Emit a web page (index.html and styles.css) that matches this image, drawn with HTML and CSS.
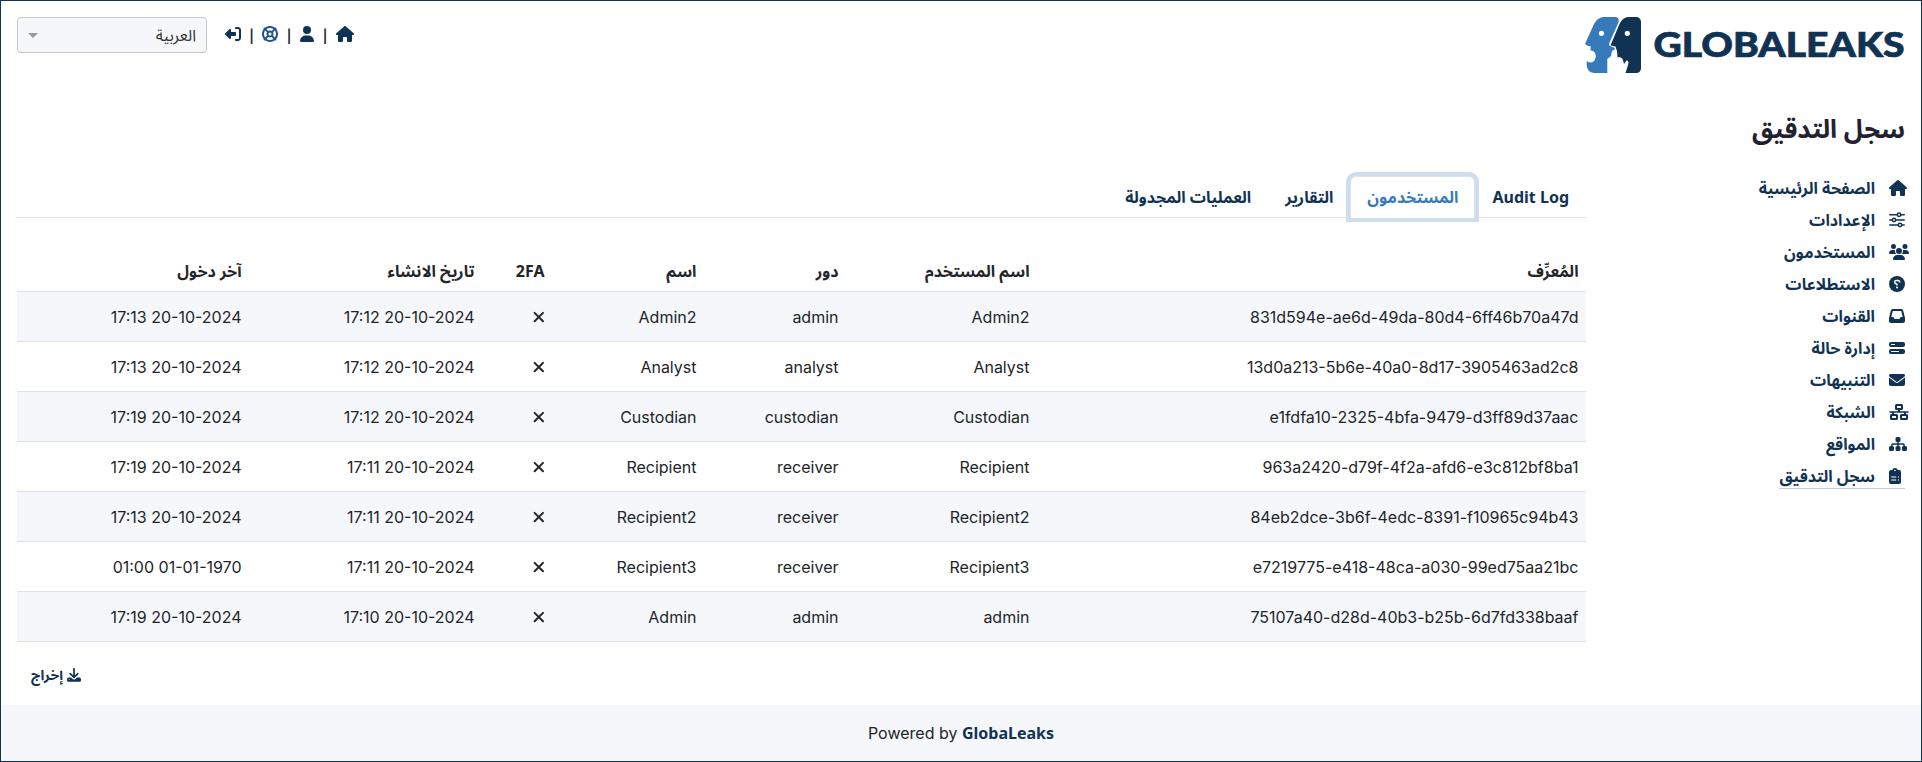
FILE: index.html
```html
<!DOCTYPE html>
<html lang="ar" dir="rtl">
<head>
<meta charset="utf-8">
<title>GlobaLeaks</title>
<link rel="stylesheet" href="styles.css">
</head>
<body>
<svg class="defs" aria-hidden="true">
  <symbol id="house" viewBox="0 0 576 512"><path d="M575.8 255.5c0 18-15 32.1-32 32.1h-32l.7 160.2c0 2.7-.2 5.4-.5 8.1V472c0 22.1-17.9 40-40 40H392c-22.1 0-40-17.9-40-40V384c0-17.7-14.3-32-32-32H256c-17.7 0-32 14.3-32 32v88c0 22.1-17.9 40-40 40H104c-22.1 0-40-17.9-40-40V287.6H32c-18 0-32-14-32-32.1c0-9 3-17 10-24L266.4 8c7-7 15-8 22-8s15 2 21 7L564.8 231.500c8 7 12 15 11 24z"/></symbol>
  <symbol id="user" viewBox="0 0 448 512"><path d="M224 256A128 128 0 1 0 224 0a128 128 0 1 0 0 256zm-45.700 48C79.800 304 0 383.800 0 482.300C0 498.700 13.300 512 29.700 512H418.300c16.400 0 29.700-13.300 29.700-29.700C448 383.800 368.200 304 269.700 304H178.300z"/></symbol>
  <symbol id="exit" viewBox="0 0 512 512"><path transform="matrix(-1 0 0 1 512 0)" d="M502.600 278.600c12.500-12.500 12.500-32.800 0-45.300L374.600 105.300C360 93 320 98 320 128v64H192c-17.700 0-32 14.300-32 32v64c0 17.700 14.300 32 32 32h128v64c0 30 40 35 54.600 22.600zM160 96c17.700 0 32-14.300 32-32s-14.300-32-32-32H96C43 32 0 75 0 128v256c0 53 43 96 96 96h64c17.700 0 32-14.300 32-32s-14.300-32-32-32H96c-17.700 0-32-14.300-32-32V128c0-17.700 14.300-32 32-32z"/></symbol>
  <symbol id="ring" viewBox="0 0 512 512"><path d="M367.2 412.5C335.9 434.9 297.5 448 256 448s-79.9-13.1-111.200-35.500l58-58c15.800 8.600 34 13.500 53.300 13.500s37.400-4.900 53.300-13.500l57.900 58zm90.700 .8c33.800-43.400 54-98 54-157.300s-20.200-113.900-54-157.300c9-12.500 7.900-30.100-3.400-41.300S425.800 45 413.300 54C369.900 20.200 315.300 0 256 0S142.100 20.200 98.700 54c-12.500-9-30.100-7.900-41.300 3.400S45 86.200 54 98.700C20.200 142.100 0 196.700 0 256s20.200 113.900 54 157.300c-9 12.500-7.900 30.100 3.400 41.300S86.200 467 98.700 458c43.400 33.800 98 54 157.300 54s113.900-20.200 157.300-54c12.500 9 30.100 7.900 41.300-3.400s12.400-28.800 3.400-41.300zm-45.500-46.100l-57.900-57.900c8.600-15.800 13.500-34 13.500-53.300s-4.900-37.400-13.500-53.300l57.900-57.900C434.900 176.100 448 214.500 448 256s-13.100 79.900-35.500 111.200zM367.200 99.500l-57.900 57.900c-15.800-8.600-34-13.500-53.300-13.500s-37.400 4.900-53.300 13.500L144.800 99.500C176.100 77.100 214.500 64 256 64s79.900 13.100 111.200 35.500zM157.500 309.300l-57.900 57.900C77.100 335.900 64 297.500 64 256s13.100-79.900 35.500-111.200l57.900 57.900c-8.600 15.800-13.500 34-13.500 53.300s4.900 37.400 13.500 53.300zM208 256a48 48 0 1 1 96 0 48 48 0 1 1-96 0z" fill-rule="evenodd"/></symbol>
  <symbol id="sliders" viewBox="0 0 16 16"><g fill="none" stroke="currentColor" stroke-width="1.500" stroke-linecap="round"><path d="M.8 2.700H8M12 2.700h3.200M.8 7.900H3M7 7.900h8.200M.8 13H9M13 13h2.200"/><circle cx="10" cy="2.700" r="1.700"/><circle cx="5" cy="7.900" r="1.700"/><circle cx="11" cy="13" r="1.700"/></g></symbol>
  <symbol id="users" viewBox="0 0 640 512"><path d="M144 0a80 80 0 1 1 0 160A80 80 0 1 1 144 0zM512 0a80 80 0 1 1 0 160A80 80 0 1 1 512 0zM0 298.700C0 239.800 47.800 192 106.700 192h42.700c15.900 0 31 3.500 44.600 9.700c-1.300 7.200-1.900 14.700-1.900 22.300c0 38.200 16.800 72.500 43.300 96H21.300C9.600 320 0 310.400 0 298.700zM405.300 320c26.600-23.500 43.300-57.800 43.300-96c0-7.600-.7-15-1.900-22.300c13.600-6.300 28.700-9.700 44.600-9.700h42.700C592.200 192 640 239.800 640 298.700c0 11.800-9.600 21.300-21.300 21.300zM224 224a96 96 0 1 1 192 0a96 96 0 1 1-192 0zM128 485.300C128 411.700 187.700 352 261.300 352h117.400C452.300 352 512 411.700 512 485.300c0 14.700-11.900 26.700-26.700 26.700H154.700c-14.700 0-26.700-11.900-26.700-26.700z"/></symbol>
  <symbol id="question" viewBox="0 0 16 16"><circle cx="8" cy="8" r="8"/><path d="M5.400 6V5.800C5.400 5 6.100 4.400 7 4.400H8.600C9.600 4.400 10.400 5.100 10.400 6c0 .8-.5 1.200-1 1.500L8 8.400v.6" transform="matrix(-1 0 0 1 16 0)" fill="none" stroke="#fff" stroke-width="1.500" stroke-linecap="round"/><circle cx="8" cy="11.500" r="1" fill="#fff"/></symbol>
  <symbol id="inbox" viewBox="0 0 512 512"><path fill-rule="evenodd" d="M121 32C91.600 32 66 52 58.900 80.500L1.900 308.400C.6 313.500 0 318.700 0 323.900V416c0 35.300 28.700 64 64 64h384c35.300 0 64-28.700 64-64v-92.100c0-5.200-.6-10.400-1.900-15.500L453.100 80.500C446 52 420.400 32 391 32zm0 64h270l48 192h-51.200c-12.100 0-23.200 6.800-28.600 17.700l-14.300 28.600c-5.400 10.800-16.500 17.700-28.600 17.700H195.800c-12.100 0-23.200-6.800-28.600-17.700l-14.300-28.600c-5.400-10.800-16.500-17.700-28.600-17.700H73z"/></symbol>
  <symbol id="server" viewBox="0 0 16 16"><path fill-rule="evenodd" d="M2 2h12a2 2 0 0 1 2 2v1a2 2 0 0 1-2 2H2a2 2 0 0 1-2-2V4a2 2 0 0 1 2-2zm0 1.900v1.200h4V3.900zM2 9h12a2 2 0 0 1 2 2v1a2 2 0 0 1-2 2H2a2 2 0 0 1-2-2v-1a2 2 0 0 1 2-2zm0 1.900v1.200h8v-1.200z"/></symbol>
  <symbol id="mail" viewBox="0 0 512 512"><path d="M48 64C21.500 64 0 85.500 0 112c0 15.100 7.100 29.300 19.200 38.400L236.800 313.600c11.400 8.500 27 8.500 38.400 0L492.800 150.400c12.100-9.100 19.200-23.300 19.200-38.400c0-26.500-21.500-48-48-48zM0 176v208c0 35.300 28.700 64 64 64h384c35.300 0 64-28.700 64-64V176L294.400 339.200c-22.800 17.100-54 17.100-76.800 0z"/></symbol>
  <symbol id="network" viewBox="0 0 20 16"><path fill-rule="evenodd" d="M7.500 0h5A1.500 1.500 0 0 1 14 1.500v3A1.500 1.500 0 0 1 12.500 6H11v1.200h8a.8.8 0 0 1 0 1.600h-2V10h.5a1.500 1.500 0 0 1 1.500 1.500v3a1.500 1.500 0 0 1-1.500 1.500h-5a1.500 1.500 0 0 1-1.500-1.500v-3a1.500 1.500 0 0 1 1.500-1.500H15V8.800H5V10h2.500A1.500 1.500 0 0 1 9 11.500v3A1.500 1.500 0 0 1 7.500 16h-5A1.500 1.500 0 0 1 1 14.500v-3A1.500 1.500 0 0 1 2.500 10H3V8.800H1a.8.8 0 0 1 0-1.600h8V6H7.500A1.500 1.500 0 0 1 6 4.500v-3A1.500 1.500 0 0 1 7.500 0zM8 2v2h4V2zM3 12v2h4v-2zM13 12v2h4v-2z"/></symbol>
  <symbol id="sitemap" viewBox="0 0 18 16"><path d="M8 1h2a1.500 1.500 0 0 1 1.500 1.500v2A1.500 1.500 0 0 1 10 6h-.3v1.300h4.500a1.600 1.600 0 0 1 1.600 1.600V10h.7a1.500 1.500 0 0 1 1.500 1.500v2a1.500 1.500 0 0 1-1.500 1.500h-2a1.500 1.500 0 0 1-1.500-1.500v-2a1.500 1.500 0 0 1 1.300-1.500V8.700H9.700V10h.3a1.500 1.500 0 0 1 1.500 1.500v2A1.500 1.500 0 0 1 10 15H8a1.500 1.500 0 0 1-1.500-1.500v-2A1.500 1.500 0 0 1 8 10h.3V8.700H3.700V10A1.500 1.500 0 0 1 5 11.500v2A1.500 1.500 0 0 1 3.500 15h-2A1.500 1.500 0 0 1 0 13.500v-2A1.500 1.500 0 0 1 1.500 10h.7V8.900a1.600 1.600 0 0 1 1.600-1.600h4.500V6H8a1.500 1.500 0 0 1-1.500-1.500v-2A1.500 1.500 0 0 1 8 1z"/></symbol>
  <symbol id="clipboard" viewBox="0 0 12 16"><path d="M2 2h1.200a3 3 0 0 1 5.600 0H10a2 2 0 0 1 2 2v10a2 2 0 0 1-2 2H2a2 2 0 0 1-2-2V4a2 2 0 0 1 2-2z"/><path d="M5.200 2.500h1.600M2.200 9h5M2.200 12h5M9 9h1M9 12h1" stroke="#fff" stroke-width="1.100"/></symbol>
  <symbol id="download" viewBox="0 0 14 14"><path fill-rule="evenodd" d="M2 9.500h2l1.600 1.400a2 2 0 0 0 2.800 0L10 9.500h2A1.700 1.700 0 0 1 14 11v1.200a1.500 1.500 0 0 1-1.500 1.500h-11A1.500 1.500 0 0 1 0 12.200V11.200A1.700 1.700 0 0 1 2 9.500zm-.2 1.700v.9h.9v-.9z"/><path d="M7 .8V9M3.200 5.600 7 9.300l3.800-3.700" fill="none" stroke="currentColor" stroke-width="1.700" stroke-linecap="round"/></symbol>
  <symbol id="cross" viewBox="0 0 12 12"><path d="M1.600 1.900l8.400 8.400M10 1.900L1.600 10.300" fill="none" stroke="currentColor" stroke-width="2" stroke-linecap="round"/></symbol>
</svg>
<div class="page">
  <header class="header">
    <svg class="logo" viewBox="0 0 320 56">
      <path class="logo-light" d="M18 0H31Q35 1 33.300 6L24.300 26Q23.500 28.500 25 29L29.500 30.700L30 32.300L27 34L26 39L22.300 42V56H9Q2 55 1.700 48V44Q6 47 9 44Q12 40 10 36Q9 33 5.500 33.500L5.700 29.500L2 28.500L0 27L9 7Q12 1 18 0z"/>
      <path class="logo-dark" d="M43 0H52Q56 1 56 5V51Q56 56 51 56H40.500L43.500 46.500Q43.500 43 41.500 43.500L39 47Q38 42 36.500 41Q34 39.500 32.500 40.500L32 34L30.500 29.500L25.500 28.500L34.500 7Q37 1 43 0z"/>
      <circle cx="16.500" cy="16.300" r="2.600" fill="#fff"/><circle cx="42.300" cy="16.300" r="2.600" fill="#fff"/>
      <text class="logo-text" x="68.500" y="40" textLength="251" lengthAdjust="spacingAndGlyphs" direction="ltr">GLOBALEAKS</text>
    </svg>
    <div class="tools">
      <svg class="icon w18"><use href="#house"/></svg><span class="sep">|</span>
      <svg class="icon w14"><use href="#user"/></svg><span class="sep">|</span>
      <svg class="icon w16 ring"><use href="#ring"/></svg><span class="sep last">|</span>
      <svg class="icon w16"><use href="#exit"/></svg>
      <div class="select"><span>العربية</span><i class="caret"></i></div>
    </div>
  </header>
  <h1 class="title">سجل التدقيق</h1>
  <div class="body">
    <nav class="side">
      <a class="link"><span class="glyph"><svg class="icon w18"><use href="#house"/></svg></span>الصفحة الرئيسية</a>
      <a class="link"><span class="glyph"><svg class="icon w16"><use href="#sliders"/></svg></span>الإعدادات</a>
      <a class="link"><span class="glyph"><svg class="icon w20"><use href="#users"/></svg></span>المستخدمون</a>
      <a class="link"><span class="glyph"><svg class="icon w16"><use href="#question"/></svg></span>الاستطلاعات</a>
      <a class="link"><span class="glyph"><svg class="icon w16"><use href="#inbox"/></svg></span>القنوات</a>
      <a class="link"><span class="glyph"><svg class="icon w16"><use href="#server"/></svg></span>إدارة حالة</a>
      <a class="link"><span class="glyph"><svg class="icon w16"><use href="#mail"/></svg></span>التنبيهات</a>
      <a class="link"><span class="glyph"><svg class="icon w20"><use href="#network"/></svg></span>الشبكة</a>
      <a class="link"><span class="glyph"><svg class="icon w18"><use href="#sitemap"/></svg></span>المواقع</a>
      <a class="link current"><span class="glyph"><svg class="icon w12"><use href="#clipboard"/></svg></span>سجل التدقيق</a>
    </nav>
    <main class="main">
      <div class="tabs"><a class="tab">Audit Log</a><a class="tab active">المستخدمون</a><a class="tab">التقارير</a><a class="tab">العمليات المجدولة</a></div>
      <table class="table">
        <colgroup><col class="c-id"><col class="c-username"><col class="c-role"><col class="c-name"><col class="c-2fa"><col class="c-created"><col class="c-login"></colgroup>
        <thead><tr><th>المُعرِّف</th><th>اسم المستخدم</th><th>دور</th><th>اسم</th><th>2FA</th><th>تاريخ الانشاء</th><th>آخر دخول</th></tr></thead>
        <tbody>
          <tr><td>831d594e-ae6d-49da-80d4-6ff46b70a47d</td><td>Admin2</td><td>admin</td><td>Admin2</td><td><svg class="cross"><use href="#cross"/></svg></td><td>20-10-2024 17:12</td><td>20-10-2024 17:13</td></tr>
          <tr><td>13d0a213-5b6e-40a0-8d17-3905463ad2c8</td><td>Analyst</td><td>analyst</td><td>Analyst</td><td><svg class="cross"><use href="#cross"/></svg></td><td>20-10-2024 17:12</td><td>20-10-2024 17:13</td></tr>
          <tr><td>e1fdfa10-2325-4bfa-9479-d3ff89d37aac</td><td>Custodian</td><td>custodian</td><td>Custodian</td><td><svg class="cross"><use href="#cross"/></svg></td><td>20-10-2024 17:12</td><td>20-10-2024 17:19</td></tr>
          <tr><td>963a2420-d79f-4f2a-afd6-e3c812bf8ba1</td><td>Recipient</td><td>receiver</td><td>Recipient</td><td><svg class="cross"><use href="#cross"/></svg></td><td>20-10-2024 17:11</td><td>20-10-2024 17:19</td></tr>
          <tr><td>84eb2dce-3b6f-4edc-8391-f10965c94b43</td><td>Recipient2</td><td>receiver</td><td>Recipient2</td><td><svg class="cross"><use href="#cross"/></svg></td><td>20-10-2024 17:11</td><td>20-10-2024 17:13</td></tr>
          <tr><td>e7219775-e418-48ca-a030-99ed75aa21bc</td><td>Recipient3</td><td>receiver</td><td>Recipient3</td><td><svg class="cross"><use href="#cross"/></svg></td><td>20-10-2024 17:11</td><td>01-01-1970 01:00</td></tr>
          <tr><td>75107a40-d28d-40b3-b25b-6d7fd338baaf</td><td>admin</td><td>admin</td><td>Admin</td><td><svg class="cross"><use href="#cross"/></svg></td><td>20-10-2024 17:10</td><td>20-10-2024 17:19</td></tr>
        </tbody>
      </table>
      <div class="export"><svg class="icon-sm"><use href="#download"/></svg><span>إخراج</span></div>
    </main>
  </div>
  <footer class="footer" dir="ltr"><span>Powered by <b>GlobaLeaks</b></span></footer>
</div>
</body>
</html>
```
FILE: styles.css
```css
* { box-sizing: border-box; }
body { margin: 0; background: #fff; color: #212529; font: 16px/24px Inter, "Noto Sans", "Noto Sans Arabic", sans-serif; }
.defs { display: none; }
.page { height: 762px; border: 1px solid #103253; display: flex; flex-direction: column; overflow: hidden; }
.header { display: flex; justify-content: space-between; height: 96px; padding: 16px; }
.logo { width: 320px; height: 56px; overflow: visible; }
.logo-light { fill: #377abc; }
.logo-dark { fill: #103253; }
.logo-text { fill: #103253; stroke: #103253; stroke-width: .7px; font: 900 33.5px Lato, sans-serif; }
.tools { display: flex; align-items: flex-start; color: #103253; }
.icon { display: block; height: 16px; fill: currentColor; flex: none; }
.tools > .icon { margin-top: 9px; }
.w12 { width: 12px; } .w14 { width: 14px; } .w16 { width: 16px; } .w18 { width: 18px; } .w20 { width: 20px; }
.ring { color: #24568a; }
.sep { width: 22px; text-align: center; font: 600 13px/38px Inter, sans-serif; color: #212529; }
.last { width: 21px; }
.select { width: 190px; height: 36px; margin-right: 18px; padding: 0 10px 0 10px; border: 1px solid #c8c8c8; border-radius: 4px; background: #f5f7fb; color: #333; display: flex; align-items: center; justify-content: space-between; }
.caret { border: 5px solid transparent; border-top-color: #999; border-bottom: 0; }
.title { margin: 12px 16px 0; height: 42px; font: bold 25.6px/40px "Noto Sans", "Noto Sans Arabic", sans-serif; color: #212130; }
.body { display: flex; flex: 1; padding: 0 16px; }
.side { width: 319px; padding-top: 25px; display: flex; flex-direction: column; align-items: flex-start; gap: 8px; }
.link { display: flex; gap: 14px; height: 24px; align-items: center; font: bold 16px/24px "Noto Sans", "Noto Sans Arabic", sans-serif; color: #103253; white-space: nowrap; }
.glyph { width: 16px; direction: ltr; }
.current { box-shadow: 0 1px #c3cde0; }
.main { width: 1569px; padding-top: 25px; }
.tabs { display: flex; height: 42px; border-bottom: 1px solid #dbe2eb; }
.tab { height: 41px; padding: 8px 16px 7px; border: 1px solid transparent; border-bottom: 0; font: bold 16px/24px "Noto Sans", "Noto Sans Arabic", sans-serif; color: #103253; white-space: nowrap; }
.active { height: 42px; background: #fff; color: #377abc; border-color: #dbe2eb; border-radius: 6px 6px 0 0; box-shadow: 0 0 0 4px #cdddee; }
.table { width: 1569px; margin-top: 24px; table-layout: fixed; border-collapse: separate; border-spacing: 0; }
.c-id { width: 549px; } .c-username { width: 191px; } .c-role { width: 142px; } .c-name { width: 152px; } .c-2fa { width: 70px; } .c-created { width: 233px; } .c-login { width: 232px; }
.table th, .table td { height: 50px; padding: 0 7.5px; text-align: right; vertical-align: middle; border-bottom: 1px solid #dbe2eb; }
.table th { font: bold 16px/24px "Noto Sans", "Noto Sans Arabic", sans-serif; padding-top: 8px; }
.table tbody tr:nth-child(odd) { background: #f5f7fb; }
.cross { display: block; width: 12px; height: 12px; }
.export { display: flex; gap: 4px; justify-content: flex-end; align-items: center; padding: 22px 13px 0 14px; font: bold 14px/21px "Noto Sans", "Noto Sans Arabic", sans-serif; color: #103253; }
.icon-sm { width: 14px; height: 14px; fill: currentColor; }
.footer { height: 56px; flex: none; background: #f5f7fb; display: flex; align-items: center; justify-content: center; }
.footer b { font-family: "Noto Sans", sans-serif; color: #103253; }
```
